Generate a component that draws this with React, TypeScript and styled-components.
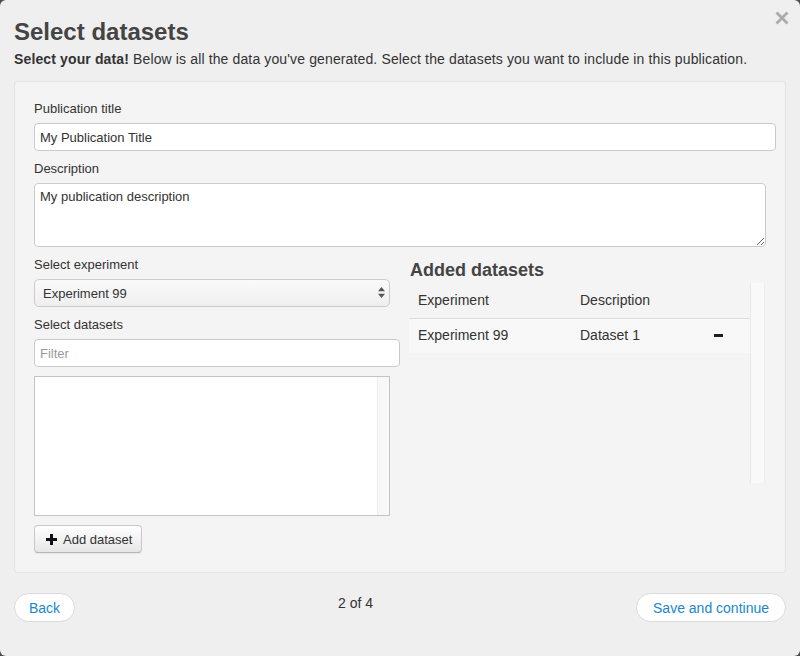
import React from 'react';
import styled, { createGlobalStyle } from 'styled-components';

const GlobalStyle = createGlobalStyle`
  html, body {
    margin: 0;
    padding: 0;
    background: #4d4d4d;
  }
  body {
    font-family: "Liberation Sans", Arial, Helvetica, sans-serif;
    color: #333;
  }
  * {
    box-sizing: border-box;
  }
`;

const PlusIcon = () => (
  <svg width="11" height="11" viewBox="0 0 11 11">
    <path d="M5.5 0v11M0 5.5h11" stroke="#111" strokeWidth="3" />
  </svg>
);

const CloseIcon = () => (
  <svg width="14" height="14" viewBox="0 0 14 14">
    <path d="M1.5 1.5l11 11M12.5 1.5l-11 11" stroke="#ababab" strokeWidth="2.8" />
  </svg>
);

const SelectArrows = () => (
  <svg width="7" height="11" viewBox="0 0 7 11">
    <path d="M3.5 0L7 4.2H0z M3.5 11L0 6.8h7z" fill="#555" />
  </svg>
);

const added = [{ experiment: 'Experiment 99', description: 'Dataset 1' }];

export default function App() {
  return (
    <>
      <GlobalStyle />
      <Modal>
        <Close aria-label="Close">
          <CloseIcon />
        </Close>
        <Title>Select datasets</Title>
        <Lead>
          <strong>Select your data!</strong> Below is all the data you've generated. Select the
          datasets you want to include in this publication.
        </Lead>

        <Well>
          <Label>Publication title</Label>
          <TextInput defaultValue="My Publication Title" />
          <Label $top>Description</Label>
          <TextArea defaultValue="My publication description" />

          <Columns>
            <Column>
              <Label>Select experiment</Label>
              <SelectWrap>
                <Select defaultValue="99">
                  <option value="99">Experiment 99</option>
                </Select>
                <ArrowSlot>
                  <SelectArrows />
                </ArrowSlot>
              </SelectWrap>

              <Label $top>Select datasets</Label>
              <FilterInput placeholder="Filter" />
              <ListBox>
                <ListBody />
                <ScrollTrack />
              </ListBox>
              <AddButton>
                <PlusIcon />
                Add dataset
              </AddButton>
            </Column>

            <Column>
              <SubHeading>Added datasets</SubHeading>
              <TableScroll>
                <Table>
                  <thead>
                    <tr>
                      <Th $width={162}>Experiment</Th>
                      <Th $width={134}>Description</Th>
                      <Th />
                    </tr>
                  </thead>
                  <tbody>
                    {added.map((d) => (
                      <tr key={d.description}>
                        <Td>{d.experiment}</Td>
                        <Td>{d.description}</Td>
                        <Td>
                          <Minus />
                        </Td>
                      </tr>
                    ))}
                  </tbody>
                </Table>
                <TableTrack />
              </TableScroll>
            </Column>
          </Columns>
        </Well>

        <Footer>
          <PillButton $pad={14}>Back</PillButton>
          <Step>2 of 4</Step>
          <PillButton $pad={16}>Save and continue</PillButton>
        </Footer>
      </Modal>
    </>
  );
}

const Modal = styled.div`
  position: relative;
  width: 800px;
  height: 656px;
  background: #efefef;
  border-radius: 6px;
  padding: 17px 14px 0 14px;
  display: flex;
  flex-direction: column;
`;

const Close = styled.button`
  position: absolute;
  top: 11px;
  right: 11px;
  padding: 0;
  border: 0;
  background: none;
  line-height: 0;
  cursor: pointer;
`;

const Title = styled.h1`
  margin: 0;
  font-size: 24px;
  line-height: 30px;
  font-weight: 700;
  color: #444;
`;

const Lead = styled.p`
  margin: 2px 0 12px;
  font-size: 14px;
  line-height: 20px;
  letter-spacing: 0.13px;
  color: #333;

  strong {
    color: #333;
  }
`;

const Well = styled.div`
  background: #f4f4f4;
  border: 1px solid #e4e4e4;
  border-radius: 4px;
  padding: 18px 9px 19px 19px;
`;

const Label = styled.div<{ $top?: boolean }>`
  font-size: 13px;
  line-height: 18px;
  color: #333;
  margin: ${(p) => (p.$top ? '9px' : '0')} 0 5px;
`;

const fieldBase = `
  display: block;
  height: 28px;
  border: 1px solid #cbcbcb;
  border-radius: 4px;
  background: #fff;
  font-family: "Liberation Sans", Arial, Helvetica, sans-serif;
  font-size: 13px;
  color: #333;
  outline: none;
`;

const TextInput = styled.input`
  ${fieldBase}
  width: 100%;
  padding: 0 5px;
`;

const TextArea = styled.textarea`
  ${fieldBase}
  width: calc(100% - 10px);
  height: 64px;
  padding: 4px 5px;
  line-height: 18px;
  resize: both;
`;

const Columns = styled.div`
  display: grid;
  grid-template-columns: 366px 1fr;
  column-gap: 9px;
  margin-top: 9px;
`;

const Column = styled.div`
  display: flex;
  flex-direction: column;
  align-items: flex-start;
`;

const SelectWrap = styled.div`
  position: relative;
  width: 356px;
`;

const Select = styled.select`
  ${fieldBase}
  width: 100%;
  border-radius: 5px;
  padding: 0 20px 0 8px;
  appearance: none;
  background: linear-gradient(#fafafa, #efefef);
`;

const ArrowSlot = styled.span`
  position: absolute;
  right: 5px;
  top: 8px;
  line-height: 0;
  pointer-events: none;
`;

const FilterInput = styled.input`
  ${fieldBase}
  width: 366px;
  padding: 0 5px;

  &::placeholder {
    color: #9a9a9a;
  }
`;

const ListBox = styled.div`
  display: flex;
  width: 356px;
  height: 140px;
  margin-top: 9px;
  border: 1px solid #c4c4c4;
  background: #fff;
`;

const ListBody = styled.div`
  flex: 1;
`;

const ScrollTrack = styled.div`
  width: 12px;
  background: #f8f8f8;
  border-left: 1px solid #ececec;
`;

const AddButton = styled.button`
  display: inline-flex;
  align-items: center;
  gap: 6px;
  height: 28px;
  margin-top: 9px;
  padding: 0 9px 0 11px;
  border: 1px solid #c8c8c8;
  border-bottom-color: #b5b5b5;
  border-radius: 4px;
  background: linear-gradient(#ffffff, #e6e6e6);
  box-shadow: 0 1px 1px rgba(0, 0, 0, 0.06);
  font-family: "Liberation Sans", Arial, Helvetica, sans-serif;
  font-size: 13px;
  color: #333;
  cursor: pointer;
`;

const SubHeading = styled.h3`
  margin: 4px 0 3px 1px;
  font-size: 18px;
  line-height: 20px;
  font-weight: 700;
  color: #444;
`;

const TableScroll = styled.div`
  display: flex;
  width: 356px;
  height: 200px;
`;

const Table = styled.table`
  width: 341px;
  align-self: flex-start;
  border-collapse: collapse;
  font-size: 14px;
  color: #333;
`;

const Th = styled.th<{ $width?: number }>`
  width: ${(p) => (p.$width ? `${p.$width}px` : 'auto')};
  height: 35px;
  padding: 7px 9px;
  text-align: left;
  font-weight: 400;
  line-height: 20px;
  border-bottom: 1px solid #dddddd;
`;

const Td = styled.td`
  height: 34px;
  padding: 6px 9px 8px;
  line-height: 20px;
  background: #f8f8f8;
`;

const Minus = styled.span`
  display: block;
  width: 9px;
  height: 3px;
  margin-top: 1px;
  background: #1e1e1e;
`;

const TableTrack = styled.div`
  width: 15px;
  background: #f9f9f9;
  border-left: 1px solid #e9e9e9;
  border-right: 1px solid #ececec;
`;

const Footer = styled.div`
  display: flex;
  align-items: flex-start;
  margin-top: 20px;
`;

const Step = styled.div`
  flex: 1;
  text-align: center;
  font-size: 14px;
  line-height: 20px;
  color: #333;
`;

const PillButton = styled.button<{ $pad: number }>`
  height: 29px;
  padding: 0 ${(p) => p.$pad}px;
  border: 1px solid #dadada;
  border-radius: 15px;
  background: #fff;
  font-family: "Liberation Sans", Arial, Helvetica, sans-serif;
  font-size: 14px;
  color: #1a87cc;
  cursor: pointer;
`;
